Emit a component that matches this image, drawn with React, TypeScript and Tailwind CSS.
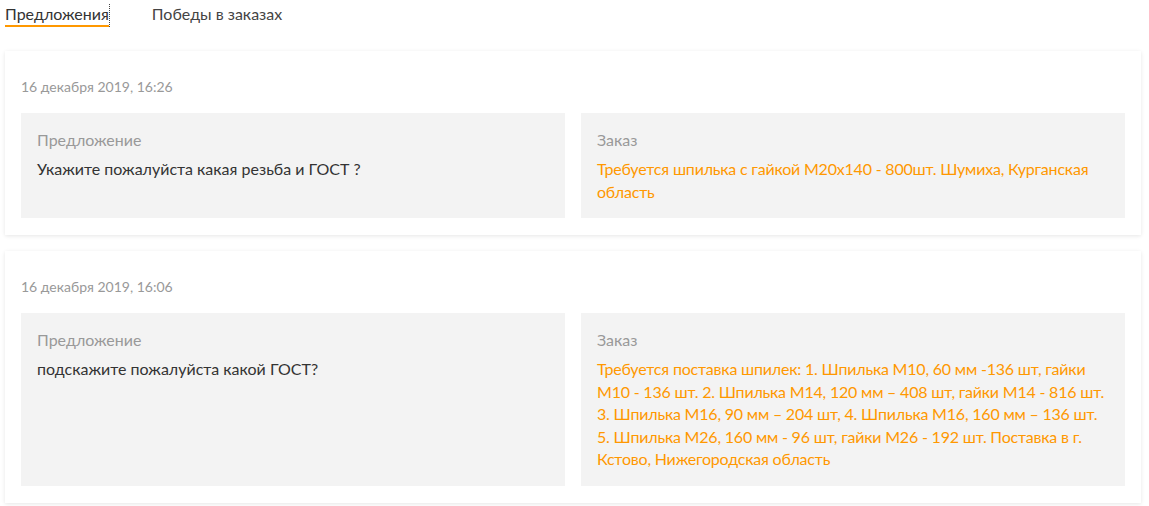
import React, { useState } from 'react';

interface Offer {
  date: string;
  offer: string;
  order: string;
}

const offers: Offer[] = [
  {
    date: '16 декабря 2019, 16:26',
    offer: 'Укажите пожалуйста какая резьба и ГОСТ ?',
    order: 'Требуется шпилька с гайкой М20х140 - 800шт. Шумиха, Курганская область',
  },
  {
    date: '16 декабря 2019, 16:06',
    offer: 'подскажите пожалуйста какой ГОСТ?',
    order:
      'Требуется поставка шпилек: 1. Шпилька М10, 60 мм -136 шт, гайки М10 - 136 шт. 2. Шпилька М14, 120 мм – 408 шт, гайки М14 - 816 шт. 3. Шпилька М16, 90 мм – 204 шт, 4. Шпилька М16, 160 мм – 136 шт. 5. Шпилька М26, 160 мм - 96 шт, гайки М26 - 192 шт. Поставка в г. Кстово, Нижегородская область',
  },
];

const tabs = ['Предложения', 'Победы в заказах'];

export default function App() {
  const [active, setActive] = useState(0);

  return (
    <div className="min-h-screen bg-white pl-[5px] pr-[8px] pb-4 font-['Lato','Open_Sans',sans-serif] text-[#333]">
      {/* Tabs */}
      <div className="flex gap-[42px] pt-[4px]">
        {tabs.map((tab, i) => (
          <button
            key={tab}
            type="button"
            onClick={() => setActive(i)}
            className={`flex text-[16px] leading-[20px] ${
              active === i ? 'border-r border-dotted border-[#444] text-[#333]' : 'text-[#444]'
            }`}
          >
            <span className={`pb-[1px] border-b-2 ${active === i ? 'border-[#ff9800]' : 'border-transparent'}`}>
              {tab}
            </span>
          </button>
        ))}
      </div>

      {/* Offers list */}
      <div className="mt-[24px] flex flex-col gap-[16px]">
        {offers.map((item) => (
          <div
            key={item.date}
            className="bg-white px-4 pt-[27px] pb-[17px] shadow-[0_1px_4px_rgba(0,0,0,0.1)]"
          >
            <div className="text-[14px] leading-[18px] text-[#999]">{item.date}</div>
            <div className="mt-[17px] grid grid-cols-2 gap-4">
              <div className="bg-[#f3f3f3] px-4 pt-[16px] pb-[15px]">
                <div className="text-[16px] leading-[22px] text-[#999]">Предложение</div>
                <div className="mt-[7px] text-[16px] leading-[22.5px] text-[#333]">{item.offer}</div>
              </div>
              <div className="bg-[#f3f3f3] px-4 pt-[16px] pb-[15px]">
                <div className="text-[16px] leading-[22px] text-[#999]">Заказ</div>
                <div className="mt-[7px] text-[16px] leading-[22.5px] tracking-[-0.2px] text-[#ff9800]">
                  {item.order}
                </div>
              </div>
            </div>
          </div>
        ))}
      </div>
    </div>
  );
}
